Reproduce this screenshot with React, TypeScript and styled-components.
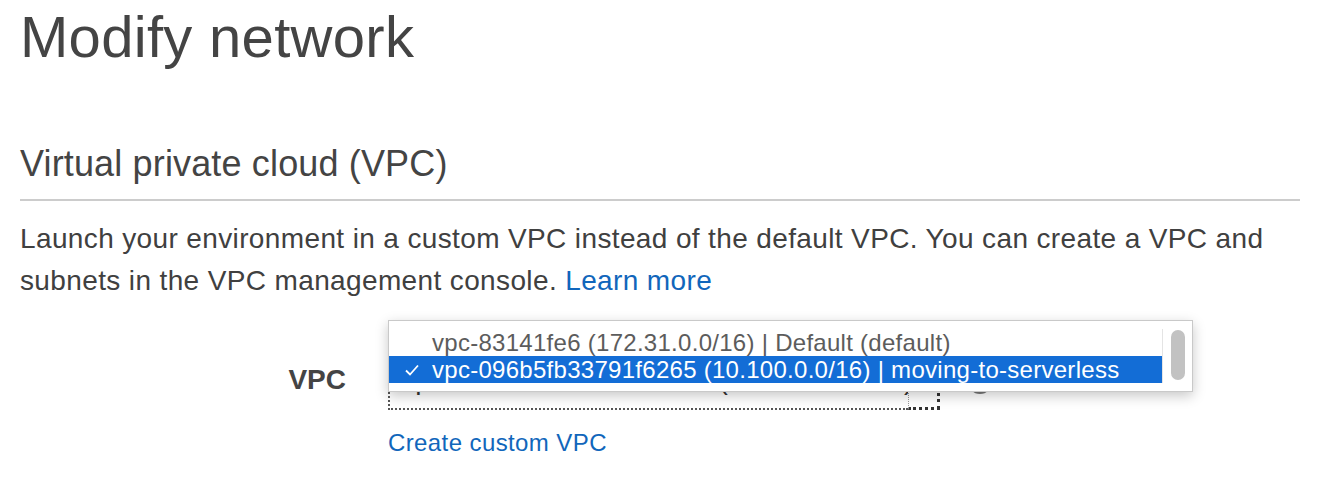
import React from "react";
import styled, { createGlobalStyle } from "styled-components";

const GlobalStyle = createGlobalStyle`
  html, body {
    margin: 0;
    padding: 0;
    background: #ffffff;
  }
  body {
    font-family: "Liberation Sans", Arial, Helvetica, sans-serif;
    color: #444444;
  }
`;

const Page = styled.div`
  padding: 8px 18px 0 20px;
  width: 1318px;
  box-sizing: border-box;
`;

const Title = styled.h1`
  margin: 0;
  font-size: 58px;
  line-height: 58px;
  font-weight: 400;
  color: #444444;
  letter-spacing: 0.3px;
`;

const SectionHeading = styled.h2`
  margin: 80px 0 0;
  padding-bottom: 17px;
  font-size: 36px;
  line-height: 36px;
  font-weight: 400;
  color: #444444;
  border-bottom: 2px solid #cccccc;
  letter-spacing: 0.15px;
`;

const Description = styled.p`
  margin: 17px 0 0;
  font-size: 28px;
  line-height: 42px;
  color: #404040;
  letter-spacing: 0.37px;
`;

const Link = styled.a`
  color: #1166bb;
  text-decoration: none;
`;

const FormGrid = styled.div`
  margin-top: 61px;
  display: grid;
  grid-template-columns: 326px 552px auto;
  column-gap: 42px;
  row-gap: 19px;
  align-items: start;
`;

const Label = styled.label`
  font-size: 28px;
  line-height: 34px;
  font-weight: 700;
  color: #444444;
  text-align: right;
`;

const SelectWrap = styled.div`
  position: relative;
  margin-top: 5px;
`;

const Select = styled.div`
  display: flex;
  height: 42px;
  box-sizing: border-box;
`;

const ValueArea = styled.div`
  flex: 1;
  overflow: hidden;
  white-space: nowrap;
  border-left: 2px dotted #555555;
  border-bottom: 2px dotted #555555;
  border-top: 2px dotted #555555;
  font-size: 28px;
  line-height: 20px;
  letter-spacing: 0.35px;
  padding: 0 0 0 11px;
  color: #333333;
`;

const ArrowBox = styled.div`
  width: 32px;
  border-left: 1px dotted #999999;
  border-right: 3px dotted #333333;
  border-bottom: 3px dotted #333333;
  border-top: 2px dotted #555555;
  box-sizing: border-box;
`;

const Popup = styled.div`
  position: absolute;
  top: -48px;
  left: 0;
  width: 805px;
  box-sizing: border-box;
  background: #ffffff;
  border: 1px solid #c9c9c9;
  box-shadow: 0 4px 12px rgba(0, 0, 0, 0.22);
  padding: 8px 0 8px;
  display: flex;
  z-index: 2;
`;

const OptionList = styled.div`
  flex: 1;
  display: flex;
  flex-direction: column;
`;

const Option = styled.div<{ $selected?: boolean }>`
  display: flex;
  align-items: center;
  height: 27px;
  font-size: 24px;
  line-height: 27px;
  letter-spacing: 0.28px;
  white-space: nowrap;
  background: ${(p) => (p.$selected ? "#136dd6" : "transparent")};
  color: ${(p) => (p.$selected ? "#ffffff" : "#5c5c5c")};
`;

const CheckCell = styled.span`
  width: 43px;
  display: flex;
  align-items: center;
  padding-left: 16px;
  box-sizing: border-box;
`;

const ScrollTrack = styled.div`
  width: 30px;
  border-left: 1px solid #e4e4e4;
  display: flex;
  justify-content: center;
  padding-top: 1px;
  box-sizing: border-box;
`;

const ScrollThumb = styled.div`
  width: 14px;
  height: 50px;
  border-radius: 7px;
  background: #c2c2c2;
`;

const InfoIcon = styled.span`
  display: inline-block;
  width: 20px;
  height: 20px;
  margin: 7px 0 0 -14px;
  border: 2px solid #777777;
  border-radius: 50%;
`;

const CreateLink = styled(Link)`
  grid-column: 2;
  font-size: 24px;
  line-height: 27px;
  letter-spacing: 0.4px;
  white-space: nowrap;
`;

const Check = () => (
  <svg width="14" height="12" viewBox="0 0 14 12" aria-hidden="true">
    <path d="M1 6.5 L5 10.5 L13 1.5" fill="none" stroke="#ffffff" strokeWidth="1.8" />
  </svg>
);

const options = [
  { id: "vpc-83141fe6", text: "vpc-83141fe6 (172.31.0.0/16) | Default (default)", selected: false },
  {
    id: "vpc-096b5fb33791f6265",
    text: "vpc-096b5fb33791f6265 (10.100.0.0/16) | moving-to-serverless",
    selected: true,
  },
];

export default function App() {
  return (
    <>
      <GlobalStyle />
      <Page>
        <Title>Modify network</Title>
        <SectionHeading>Virtual private cloud (VPC)</SectionHeading>
        <Description>
          Launch your environment in a custom VPC instead of the default VPC. You can create a VPC and
          subnets in the VPC management console. <Link href="#">Learn more</Link>
        </Description>
        <FormGrid>
          <Label>VPC</Label>
          <SelectWrap>
            <Select>
              <ValueArea>vpc-096b5fb33791f6265 (10.100.0.0/16) | moving-to-serverless</ValueArea>
              <ArrowBox />
            </Select>
            <Popup>
              <OptionList>
                {options.map((o) => (
                  <Option key={o.id} $selected={o.selected}>
                    <CheckCell>{o.selected ? <Check /> : null}</CheckCell>
                    {o.text}
                  </Option>
                ))}
              </OptionList>
              <ScrollTrack>
                <ScrollThumb />
              </ScrollTrack>
            </Popup>
          </SelectWrap>
          <InfoIcon />
          <CreateLink href="#">Create custom VPC</CreateLink>
        </FormGrid>
      </Page>
    </>
  );
}
